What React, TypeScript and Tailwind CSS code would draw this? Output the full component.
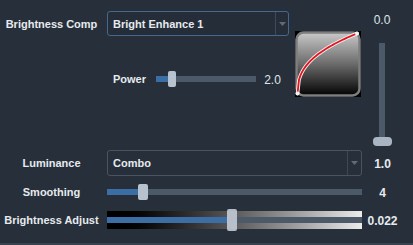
import React from "react";

const curvePts = Array.from({ length: 41 }, (_, i) => {
  const t = i / 40;
  const x = 2.5 + 59.5 * t;
  const y = 62.5 - 60 * Math.pow(t, 0.4);
  return `${x.toFixed(2)},${y.toFixed(2)}`;
}).join(" ");

function Arrow() {
  return (
    <svg width="7" height="4" viewBox="0 0 7 4">
      <path d="M0 0 L7 0 L3.5 4 Z" fill="#5d6b7a" />
    </svg>
  );
}

function CurveBox() {
  return (
    <svg width="66" height="66" viewBox="0 0 66 66">
      <defs>
        <linearGradient id="cg" x1="0" y1="0" x2="0" y2="1">
          <stop offset="0" stopColor="#c9c9c9" />
          <stop offset="0.5" stopColor="#6b6b6b" />
          <stop offset="1" stopColor="#030303" />
        </linearGradient>
      </defs>
      <rect x="0" y="0" width="66" height="66" fill="#000" />
      <rect x="1.5" y="1.5" width="63" height="63" rx="7" fill="url(#cg)" stroke="#7e7e7e" strokeWidth="2.5" />
      <polyline points={curvePts} fill="none" stroke="#f4f4f4" strokeWidth="3.6" strokeLinecap="round" strokeLinejoin="round" />
      <polyline points={curvePts} fill="none" stroke="#e3141f" strokeWidth="1.8" strokeLinecap="round" strokeLinejoin="round" />
      <circle cx="2.5" cy="62.5" r="2" fill="#f4f4f4" />
      <circle cx="62" cy="2.5" r="2" fill="#f4f4f4" />
    </svg>
  );
}

export default function App() {
  return (
    <div className="w-[413px] h-[245px] bg-[#27303a] overflow-hidden flex flex-col border-b-2 border-[#364250] text-[11px] font-bold text-[#e6eaee] font-['Liberation_Sans',Arial,sans-serif] leading-none">
      {/* top section */}
      <div className="flex h-[148px]">
        <div className="w-[295px] flex flex-col">
          <div className="flex items-center mt-[11px] h-[25px]">
            <div className="w-[103px] text-center pt-[1px]">Brightness Comp</div>
            <div className="ml-[4px] w-[182px] h-[25px] border border-[#45698e] rounded-[3px] flex items-center bg-[#252e38]">
              <div className="flex-1 pl-[5px] pt-[1px]">Bright Enhance 1</div>
              <div className="w-px h-full bg-[#3a4b5d]" />
              <div className="w-[12px] flex items-center justify-center">
                <Arrow />
              </div>
            </div>
          </div>
          <div className="flex items-center mt-[35px] h-[16px]">
            <div className="ml-[107px] w-[45px] text-center pt-[1px]">Power</div>
            <div className="ml-[4px] w-[100px] h-[16px] flex items-center relative">
              <div className="w-[12px] h-[6px] bg-[#3a6ea5]" />
              <div className="flex-1 h-[6px] bg-[#4b5969]" />
              <div className="absolute left-[12px] top-0 w-[8px] h-[16px] rounded-[2px] bg-[#b7c2cf]" />
            </div>
            <div className="w-[33px] text-center font-normal text-[12px] text-[#dfe5ea] pt-[1px]">2.0</div>
          </div>
        </div>
        <div className="mt-[31px] w-[66px] h-[66px]">
          <CurveBox />
        </div>
        <div className="w-[42px] flex flex-col items-center">
          <div className="mt-[14px] h-[12px] font-normal text-[12px] text-[#dfe5ea]">0.0</div>
          <div className="mt-[17px] w-[19px] h-[103px] relative flex justify-center">
            <div className="w-[6px] h-[98px] bg-[#4b5969]" />
            <div className="absolute bottom-0 left-0 w-[19px] h-[9px] rounded-[4px] bg-[#a9b5c3]" />
          </div>
        </div>
      </div>

      {/* Luminance */}
      <div className="flex items-center mt-[2px] h-[26px]">
        <div className="w-[103px] text-center pt-[1px]">Luminance</div>
        <div className="ml-[4px] w-[255px] h-[26px] border border-[#4a5461] rounded-[3px] flex items-center">
          <div className="flex-1 pl-[5px] pt-[1px]">Combo</div>
          <div className="w-px h-full bg-[#3f4955]" />
          <div className="w-[13px] flex items-center justify-center">
            <Arrow />
          </div>
        </div>
        <div className="w-[41px] text-center text-[12px] pt-[1px]">1.0</div>
      </div>

      {/* Smoothing */}
      <div className="flex items-center mt-[8px] h-[16px]">
        <div className="w-[103px] text-center pt-[1px]">Smoothing</div>
        <div className="ml-[4px] w-[255px] h-[16px] flex items-center relative">
          <div className="w-[32px] h-[6px] bg-[#3a6ea5]" />
          <div className="flex-1 h-[6px] bg-[#4b5969]" />
          <div className="absolute left-[31px] top-0 w-[10px] h-[16px] rounded-[2px] bg-[#b7c2cf]" />
        </div>
        <div className="w-[41px] text-center text-[12px] pt-[1px]">4</div>
      </div>

      {/* Brightness Adjust */}
      <div className="flex items-center mt-[9px] h-[22px]">
        <div className="w-[103px] text-center pt-[1px]">Brightness Adjust</div>
        <div className="ml-[4px] w-[255px] h-[22px] flex items-center relative">
          <div className="w-full h-[18px] bg-gradient-to-r from-[#000000] to-[#ececec] flex items-center">
            <div className="w-[121px] h-[6px] bg-[#3a6ea5]" />
            <div className="flex-1 h-[6px] bg-[#4b5969]" />
          </div>
          <div className="absolute left-[120px] top-0 w-[10px] h-[22px] rounded-[2px] bg-[#c3cbd5]/90" />
        </div>
        <div className="w-[41px] text-center text-[12px] pt-[1px]">0.022</div>
      </div>
    </div>
  );
}
